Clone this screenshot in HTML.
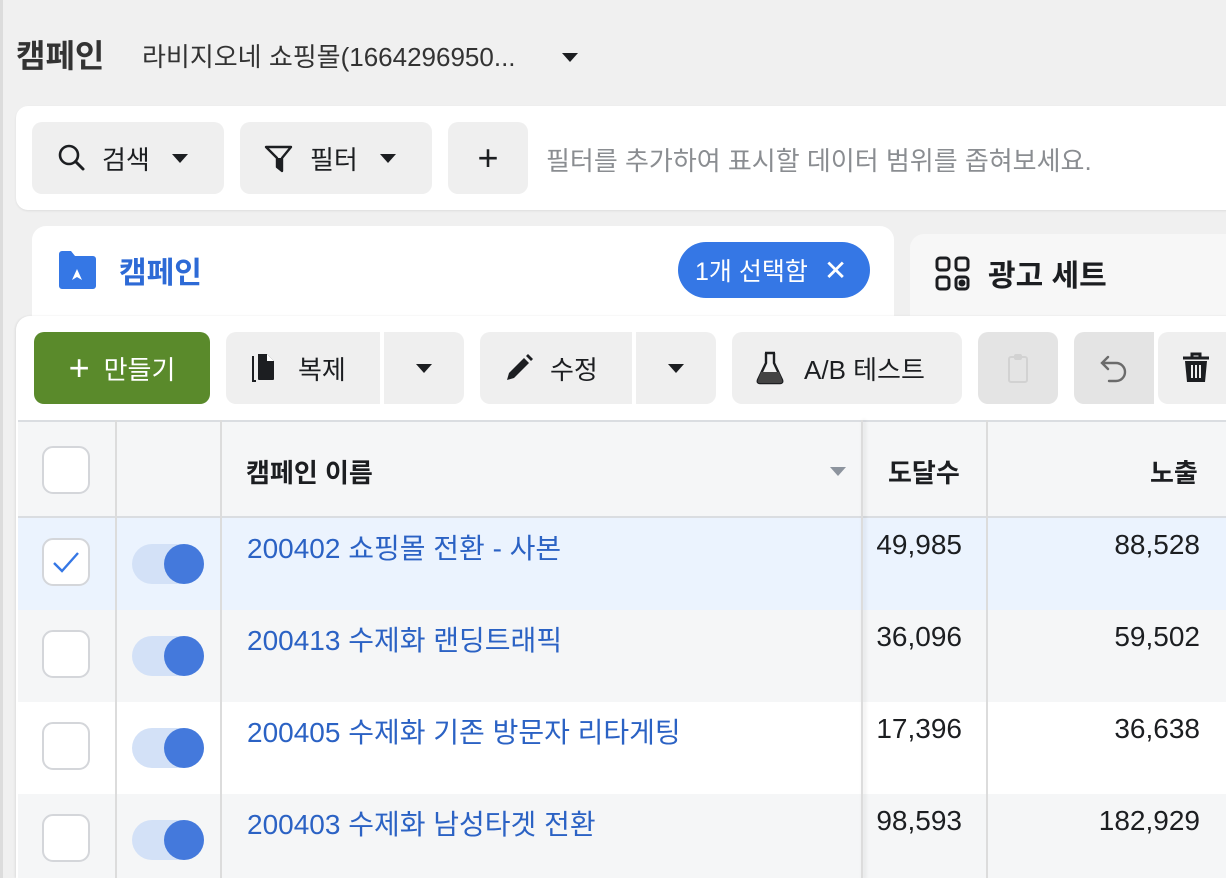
<!DOCTYPE html><html><head><meta charset="utf-8"><style>
*{box-sizing:border-box;margin:0;padding:0}
html,body{width:1226px;height:878px;overflow:hidden}
body{background:#f0f0f0;font-family:"Liberation Sans","Noto Sans CJK KR",sans-serif;color:#1c1e21;position:relative}
.a{position:absolute}
.btn{position:absolute;background:#efefef;border-radius:10px;display:flex;align-items:center;font-size:26px;color:#1c1e21}
.caret{width:0;height:0;border-left:8px solid transparent;border-right:8px solid transparent;border-top:9px solid #1c1e21;display:inline-block}
.cb{position:absolute;left:42px;width:48px;height:48px;border:2px solid #d4d6da;border-radius:11px;background:#fff}
.tg{position:absolute;left:132px;width:72px;height:40px;border-radius:20px;background:#d3e1f7}
.tg:after{content:"";position:absolute;right:0;top:0;width:40px;height:40px;border-radius:50%;background:#4479dc}
.row{position:absolute;left:18px;width:1208px;height:92px}
.nm{position:absolute;left:247px;font-size:28px;color:#2b62c4}
.n1{position:absolute;right:264px;font-size:28px}
.n2{position:absolute;right:26px;font-size:28px}
</style></head><body>
<div class="a" style="left:0;top:0;width:3px;height:878px;background:#dcdcdc"></div>
<div class="a" style="left:16px;top:31px;font-size:32px;font-weight:bold;color:#333">캠페인</div>
<div class="a" style="left:142px;top:37px;font-size:26px;color:#333">라비지오네 쇼핑몰(1664296950...</div>
<div class="a" style="left:562px;top:49px"><span class="caret"></span></div>

<div class="a" style="left:16px;top:106px;width:1230px;height:104px;background:#fff;border-radius:12px;box-shadow:0 1px 2px rgba(0,0,0,.08)"></div>
<div class="btn" style="left:32px;top:122px;width:192px;height:72px">
<svg style="margin-left:24px" width="32" height="32" viewBox="0 0 32 32"><circle cx="13" cy="13" r="9" fill="none" stroke="#1c1e21" stroke-width="2.6"/><path d="M19.5 19.5L27 27" stroke="#1c1e21" stroke-width="3" stroke-linecap="round"/></svg>
<span style="margin-left:14px">검색</span><span class="caret" style="margin-left:22px"></span></div>
<div class="btn" style="left:240px;top:122px;width:192px;height:72px">
<svg style="margin-left:24px" width="30" height="30" viewBox="0 0 30 30"><path d="M2 4H27L18 15V28L13 24V15Z" fill="none" stroke="#1c1e21" stroke-width="2.4" stroke-linejoin="round"/><path d="M13 15V24L18 28V15Z" fill="#1c1e21"/></svg>
<span style="margin-left:16px">필터</span><span class="caret" style="margin-left:22px"></span></div>
<div class="btn" style="left:448px;top:122px;width:80px;height:72px;justify-content:center;font-size:36px">+</div>
<div class="a" style="left:546px;top:141px;font-size:26px;color:#8a8d91">필터를 추가하여 표시할 데이터 범위를 좁혀보세요.</div>

<div class="a" style="left:910px;top:234px;width:330px;height:90px;background:#f7f7f7;border-radius:14px 0 0 0"></div>
<svg class="a" style="left:934px;top:255px" width="38" height="38" viewBox="0 0 38 38" fill="none" stroke="#1c1e21" stroke-width="3"><rect x="3" y="3" width="12" height="12" rx="3"/><rect x="22" y="3" width="12" height="12" rx="3"/><rect x="3" y="22" width="12" height="12" rx="3"/><rect x="22" y="22" width="12" height="12" rx="3"/><circle cx="28" cy="28" r="2" fill="#1c1e21"/></svg>
<div class="a" style="left:988px;top:251px;font-size:30px;font-weight:bold">광고 세트</div>

<div class="a" style="left:32px;top:226px;width:862px;height:110px;background:#fff;border-radius:14px 14px 0 0"></div>
<div class="a" style="left:16px;top:316px;width:1230px;height:562px;background:#fff;border-radius:14px 0 0 0;box-shadow:-1px 0 2px rgba(0,0,0,.08)"></div>
<svg class="a" style="left:57px;top:250px" width="40" height="40" viewBox="0 0 40 40"><path d="M2 4a3 3 0 0 1 3-3h9l4 5h18a3 3 0 0 1 3 3v27a3 3 0 0 1-3 3H5a3 3 0 0 1-3-3z" fill="#3577e5"/><path d="M15 30L20 19L25 30L20 27Z" fill="#fff"/></svg>
<div class="a" style="left:119px;top:248px;font-size:30px;font-weight:bold;color:#2d6ad6">캠페인</div>
<div class="a" style="left:678px;top:242px;width:192px;height:56px;border-radius:28px;background:#3577e5;color:#fff;font-size:25px;display:flex;align-items:center;padding-left:17px">1개 선택함<span style="margin-left:16px;font-size:28px">✕</span></div>

<div class="btn" style="left:34px;top:332px;width:176px;height:72px;background:#5a8a2b;color:#fff;justify-content:center"><span style="font-size:36px;margin-right:14px">+</span>만들기</div>
<div class="btn" style="left:226px;top:332px;width:154px;height:72px;border-radius:10px 0 0 10px">
<svg style="margin-left:22px" width="32" height="32" viewBox="0 0 32 32"><path d="M5 4V29H8" fill="none" stroke="#1c1e21" stroke-width="2"/><path d="M10 2H19L26 9V27Q26 28 25 28H11Q10 28 10 27Z" fill="#1c1e21"/><path d="M19 2V9H26" fill="#fff"/></svg>
<span style="margin-left:18px">복제</span></div>
<div class="btn" style="left:384px;top:332px;width:80px;height:72px;border-radius:0 10px 10px 0;justify-content:center"><span class="caret"></span></div>
<div class="btn" style="left:480px;top:332px;width:152px;height:72px;border-radius:10px 0 0 10px">
<svg style="margin-left:24px" width="30" height="30" viewBox="0 0 30 30"><path d="M3 27L5 20L20 5L25 10L10 25Z" fill="#1c1e21"/><path d="M22 3L24 1L29 6L27 8Z" fill="#1c1e21"/></svg>
<span style="margin-left:16px">수정</span></div>
<div class="btn" style="left:636px;top:332px;width:80px;height:72px;border-radius:0 10px 10px 0;justify-content:center"><span class="caret"></span></div>
<div class="btn" style="left:732px;top:332px;width:230px;height:72px">
<svg style="margin-left:24px" width="28" height="34" viewBox="0 0 28 34"><path d="M9 2H19M10 2V12L2 29Q1 32 4 32H24Q27 32 26 29L18 12V2" fill="none" stroke="#1c1e21" stroke-width="2.4"/><path d="M5 21H23L26 29Q27 32 24 32H4Q1 32 2 29Z" fill="#444"/></svg>
<span style="margin-left:20px">A/B 테스트</span></div>
<div class="btn" style="left:978px;top:332px;width:80px;height:72px;background:#e4e4e4;justify-content:center"><svg width="22" height="32" viewBox="0 0 22 32"><rect x="2" y="5" width="18" height="25" rx="2" fill="none" stroke="#d2d2d2" stroke-width="2"/><rect x="7" y="2" width="8" height="6" rx="2" fill="#d2d2d2"/></svg></div>
<div class="btn" style="left:1074px;top:332px;width:80px;height:72px;background:#e4e4e4;border-radius:10px 0 0 10px;justify-content:center"><svg width="30" height="30" viewBox="0 0 30 30"><path d="M9 4L3 10L9 16M3 10H17A9 9 0 0 1 17 28H10" fill="none" stroke="#6b6b6b" stroke-width="2.4" stroke-linecap="round"/></svg></div>
<div class="btn" style="left:1158px;top:332px;width:90px;height:72px;border-radius:10px 0 0 10px"><svg style="margin-left:24px" width="28" height="32" viewBox="0 0 28 32"><path d="M1 6H27M10 6V2H18V6" stroke="#1c1e21" stroke-width="3" fill="none"/><path d="M3 9H25L23 30H5Z" fill="#1c1e21"/><path d="M10 13V26M14 13V26M18 13V26" stroke="#efefef" stroke-width="2"/></svg></div>

<div class="a" style="left:18px;top:420px;width:1208px;height:98px;background:#f5f6f7;border-top:2px solid #dadde1;border-bottom:2px solid #dadde1"></div>
<div class="cb" style="top:446px"></div>
<div class="a" style="left:246px;top:453px;font-size:26px;font-weight:bold">캠페인 이름</div>
<div class="a" style="left:830px;top:467px;border-left:8px solid transparent;border-right:8px solid transparent;border-top:9px solid #8d949e"></div>
<div class="a" style="left:888px;top:453px;font-size:26px;font-weight:bold">도달수</div>
<div class="a" style="left:1150px;top:453px;font-size:26px;font-weight:bold">노출</div>

<div class="row" style="top:518px;background:#ebf3fe"></div>
<div class="row" style="top:610px;background:#f5f6f7"></div>
<div class="row" style="top:702px;background:#fff"></div>
<div class="row" style="top:794px;background:#f5f6f7"></div>

<div class="a" style="left:115px;top:420px;width:2px;height:460px;background:#dcdcdc"></div>
<div class="a" style="left:220px;top:420px;width:2px;height:460px;background:#dcdcdc"></div>
<div class="a" style="left:861px;top:420px;width:2px;height:460px;background:#dcdcdc;box-shadow:2px 0 4px rgba(0,0,0,.12)"></div>
<div class="a" style="left:986px;top:420px;width:2px;height:460px;background:#dcdcdc"></div>

<div class="cb" style="top:538px"><svg width="44" height="44" viewBox="0 0 44 44"><path d="M10 23L18 31L34 13" fill="none" stroke="#3577e5" stroke-width="2.4"/></svg></div>
<div class="tg" style="top:544px"></div>
<div class="nm" style="top:527px">200402 쇼핑몰 전환 - 사본</div>
<div class="n1" style="top:529px">49,985</div><div class="n2" style="top:529px">88,528</div>

<div class="cb" style="top:630px"></div><div class="tg" style="top:636px"></div>
<div class="nm" style="top:619px">200413 수제화 랜딩트래픽</div>
<div class="n1" style="top:621px">36,096</div><div class="n2" style="top:621px">59,502</div>

<div class="cb" style="top:722px"></div><div class="tg" style="top:728px"></div>
<div class="nm" style="top:711px">200405 수제화 기존 방문자 리타게팅</div>
<div class="n1" style="top:713px">17,396</div><div class="n2" style="top:713px">36,638</div>

<div class="cb" style="top:814px"></div><div class="tg" style="top:820px"></div>
<div class="nm" style="top:803px">200403 수제화 남성타겟 전환</div>
<div class="n1" style="top:805px">98,593</div><div class="n2" style="top:805px">182,929</div>
</body></html>
